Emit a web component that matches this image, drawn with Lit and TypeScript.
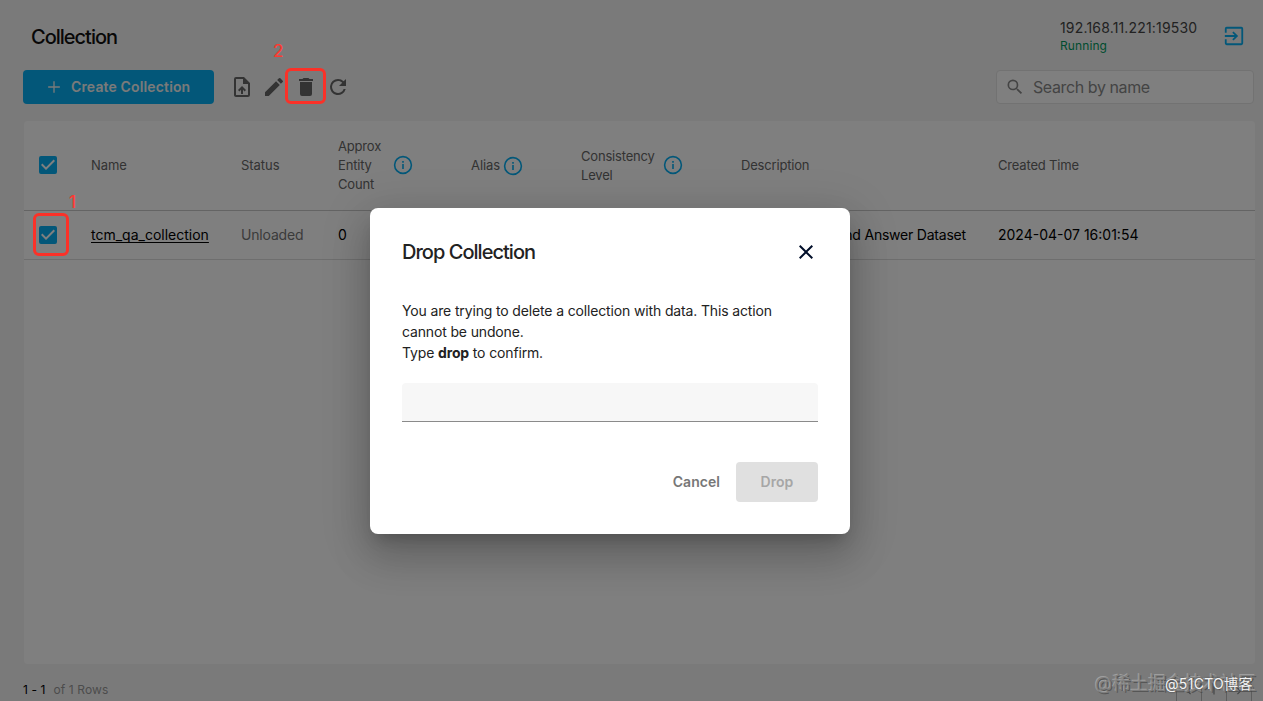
import { LitElement, html, css, svg } from "lit";
import { customElement } from "lit/decorators.js";

const icon = (size: number, body: unknown, cls = "") =>
  html`<svg class=${cls} width=${size} height=${size} viewBox="0 0 24 24" fill="currentColor">${body}</svg>`;

const infoIcon = () => html`<svg class="info" width="20" height="20" viewBox="0 0 20 20" fill="none" stroke="currentColor">
  <circle cx="10" cy="10" r="8.4" stroke-width="1.6"></circle>
  <path d="M10 9v5" stroke-width="1.6"></path><path d="M10 6v1.7" stroke-width="1.6"></path></svg>`;

const checkIcon = () => icon(24, svg`<path d="M19 3H5a2 2 0 0 0-2 2v14a2 2 0 0 0 2 2h14a2 2 0 0 0 2-2V5a2 2 0 0 0-2-2zm-9 14-5-5 1.41-1.41L10 14.17l7.59-7.59L19 8l-9 9z"/>`, "check");

@customElement("app-root")
export class AppRoot extends LitElement {
  static styles = css`
    :host { display: block; position: relative; width: 1263px; height: 701px; overflow: hidden; background: #f5f5f5; font-family: Inter, "Noto Sans CJK SC", sans-serif; font-size: 14px; color: #010e29; }
    * { box-sizing: border-box; }
    svg { display: block; flex: none; }
    .page { height: 701px; padding: 0 9px 0 23px; display: flex; flex-direction: column; white-space: nowrap; color: #000; }
    header { height: 70px; display: flex; align-items: flex-start; padding: 0 8px; }
    h1 { margin: 22px 0 0; flex: 1; font-size: 20px; line-height: 30px; font-weight: 500; letter-spacing: -1px; color: #111; }
    .server { margin: 19px 25px 0 0; width: 138px; line-height: 18px; color: #444; }
    .addr { letter-spacing: 0.17px; }
    .running { font-size: 12px; line-height: 17px; letter-spacing: 0.1px; color: #009a60; }
    .exit { margin-top: 25px; margin-right: 1px; color: #06aff2; }
    .bar { height: 34px; display: flex; align-items: center; }
    .create { width: 191px; height: 34px; border-radius: 4px; background: #06aff2; color: #f4f4f4; display: flex; align-items: center; padding-left: 21px; gap: 7px; font-weight: 600; letter-spacing: 0.14px; margin-right: 16px; }
    .create span { padding-bottom: 1px; }
    .tools { display: flex; gap: 8px; color: #666; flex: 1; }
    .search { width: 258px; height: 34px; border: 1px solid #e4e4e4; border-radius: 4px; background: #fff; display: flex; align-items: center; gap: 8px; padding-left: 8px; font-size: 16px; letter-spacing: -0.4px; color: #888; }
    .table { margin-top: 17px; height: 543px; background: #fff; border-radius: 4px; width: 1231px; margin-left: 1px; flex: none; }
    .row { display: grid; grid-template-columns: 67px 150px 97px 133px 110px 160px 257px 1fr; align-items: center; height: 49px; padding-bottom: 1px; border-bottom: 1px solid #dcdcdc; letter-spacing: 0; }
    .head { height: 90px; padding-bottom: 0; font-size: 13px; line-height: 19px; color: #666; letter-spacing: -0.05px; border-bottom-color: #c8c8c8; }
    .tight { letter-spacing: -0.18px; }
    .desc { letter-spacing: -0.22px; }
    .cell { display: flex; align-items: center; }
    .check { margin-left: 12px; color: #06aff2; }
    .head .check { margin-bottom: 2px; }
    .info { color: #06aff2; }
    .gap3 { gap: 3px; }
    .gap8 { gap: 8px; }
    .gap12 { gap: 12px; }
    .up { margin-bottom: 2px; }
    .name { text-decoration: underline; text-underline-offset: 2px; text-decoration-skip-ink: none; }
    .muted { color: #777; letter-spacing: -0.17px; }
    footer { height: 37px; display: flex; align-items: flex-start; font-size: 12px; padding-top: 18px; gap: 8px; letter-spacing: 0.1px; }
    .rows { color: #999; flex: 1; }
    .pager { display: flex; margin: 2px 2px 0 0; color: #888; }
    .pager span { width: 25px; height: 17px; border-left: 1px solid #bbb; display: flex; justify-content: center; align-items: flex-start; }
    .pager span:last-child { border-right: 1px solid #bbb; width: 26px; }
    .overlay { position: absolute; inset: 0; background: rgba(0, 0, 0, 0.5); display: flex; justify-content: center; padding-top: 208px; align-items: flex-start; }
    .dialog { width: 480px; height: 326px; margin-right: 43px; border-radius: 8px; background: #fff; padding: 32px; display: flex; flex-direction: column; color: #222; box-shadow: 0 11px 15px -7px rgba(0,0,0,.2), 0 24px 38px 3px rgba(0,0,0,.14), 0 9px 46px 8px rgba(0,0,0,.12); }
    .dhead { display: flex; justify-content: space-between; height: 24px; align-items: center; font-size: 20px; font-weight: 500; letter-spacing: -0.97px; }
    .dhead svg { color: #010e29; }
    .text { margin-top: 36px; line-height: 21px; letter-spacing: -0.145px; white-space: nowrap; }
    .input { margin-top: 20px; height: 39px; background: #f7f7f7; border-bottom: 1px solid #8a8a8a; border-radius: 4px 4px 0 0; }
    .actions { margin-top: 40px; display: flex; justify-content: flex-end; align-items: center; gap: 16px; font-weight: 600; color: #777; letter-spacing: 0.05px; }
    .actions > span { padding-bottom: 1px; }
    .drop { width: 82px; height: 40px; padding-bottom: 1px; background: #e0e0e0; color: #a6a6a6; border-radius: 4px; display: flex; align-items: center; justify-content: center; }
    .mark { position: absolute; border: 3px solid #fb3128; border-radius: 6px; }
    .m1 { left: 33px; top: 213px; width: 36px; height: 43px; }
    .m2 { left: 285px; top: 68px; width: 41px; height: 36px; }
    .num { position: absolute; color: #fb3b32; font-size: 17px; line-height: 20px; font-weight: 500; }
    .n1 { left: 69px; top: 192px; }
    .n2 { left: 273px; top: 41px; }
    .wm { position: absolute; white-space: nowrap; }
    .w1 { left: 1095px; top: 670px; font-size: 18px; line-height: 28px; color: rgba(128,128,128,.8); text-shadow: -1px -1px 0 rgba(180,180,180,.65), 1px 1px 0 rgba(70,70,70,.7); }
    .w2 { left: 1165px; top: 674px; font-size: 14px; letter-spacing: 0.3px; line-height: 20px; color: #f4f4f4; text-shadow: 0 0 2px #444; }
  `;

  render() {
    return html`
      <div class="page">
        <header>
          <h1>Collection</h1>
          <div class="server"><div class="addr">192.168.11.221:19530</div><div class="running">Running</div></div>
          ${icon(22, svg`<path d="M10.1 15.6 11.5 17l5-5-5-5-1.4 1.4 2.6 2.6H2v2h10.7zM20 2H4a2 2 0 0 0-2 2v4.5h2V4h16v16H4v-4.500H2V20a2 2 0 0 0 2 2h16a2 2 0 0 0 2-2V4a2 2 0 0 0-2-2z"/>`, "exit")}
        </header>
        <div class="bar">
          <div class="create">${icon(20, svg`<path d="M19 12.8h-6.2V19h-1.6v-6.2H5v-1.6h6.2V5h1.600v6.2H19z"/>`)}<span>Create Collection</span></div>
          <div class="tools">
            ${icon(24, svg`<path d="M14 2H6a2 2 0 0 0-2 2v16c0 1.1.89 2 1.99 2H18a2 2 0 0 0 2-2V8l-6-6zm4 18H6V4h7v5h5v11zM8 15.01l1.41 1.41L11 14.84V19h2v-4.16l1.59 1.59L16 15.01 12.01 11z"/>`)}
            ${icon(24, svg`<path d="M3 17.25V21h3.75L17.81 9.94l-3.75-3.75L3 17.25zM20.71 7.04a1 1 0 0 0 0-1.41l-2.34-2.34a1 1 0 0 0-1.41 0l-1.83 1.83 3.75 3.75 1.83-1.83z"/>`)}
            ${icon(24, svg`<path d="M6 19a2 2 0 0 0 2 2h8a2 2 0 0 0 2-2V7H6v12zM19 4h-3.5l-1-1h-5l-1 1H5v2h14V4z"/>`)}
            ${icon(24, svg`<path d="M17.65 6.35A7.96 7.96 0 0 0 12 4a8 8 0 1 0 7.73 10h-2.08A6 6 0 1 1 12 6c1.66 0 3.14.69 4.22 1.78L13 11h7V4l-2.35 2.35z"/>`)}
          </div>
          <div class="search">${icon(20, svg`<path d="M15.5 14h-.79l-.28-.27A6.47 6.47 0 0 0 16 9.5 6.5 6.5 0 1 0 9.5 16c1.61 0 3.09-.59 4.23-1.57l.27.28v.79l5 4.99L20.49 19l-4.99-5zm-6 0a4.5 4.5 0 1 1 0-9 4.5 4.5 0 0 1 0 9z"/>`)}<span>Search by name</span></div>
        </div>
        <div class="table">
          <div class="row head">
            <div>${checkIcon()}</div>
            <div>Name</div>
            <div>Status</div>
            <div class="cell gap12 tight"><span>Approx<br>Entity<br>Count</span><div class="up">${infoIcon()}</div></div>
            <div class="cell gap3"><span>Alias</span>${infoIcon()}</div>
            <div class="cell gap8 tight"><span>Consistency<br>Level</span><div class="up">${infoIcon()}</div></div>
            <div class="tight">Description</div>
            <div class="tight">Created Time</div>
          </div>
          <div class="row">
            <div>${checkIcon()}</div>
            <div><span class="name">tcm_qa_collection</span></div>
            <div class="muted">Unloaded</div>
            <div>0</div><div></div><div></div>
            <div class="desc">TCM Question and Answer Dataset</div>
            <div>2024-04-07 16:01:54</div>
          </div>
        </div>
        <footer><span>1 - 1</span><span class="rows">of 1 Rows</span>
          <div class="pager">
            <span>${icon(14, svg`<path d="M15.4 7.4 14 6l-6 6 6 6 1.400-1.400L10.800 12z"/>`)}</span>
            <span>${icon(14, svg`<path d="M11 4h2v14h-2z"/>`)}</span>
            <span>${icon(14, svg`<path d="M10 6 8.600 7.400 13.200 12l-4.600 4.600L10 18l6-6z"/>`)}</span>
          </div>
        </footer>
      </div>
      <div class="overlay">
        <div class="dialog">
          <div class="dhead"><span>Drop Collection</span>${icon(24, svg`<path d="M19 6.41 17.59 5 12 10.59 6.41 5 5 6.41 10.59 12 5 17.59 6.41 19 12 13.41 17.59 19 19 17.59 13.41 12z"/>`)}</div>
          <div class="text">You are trying to delete a collection with data. This action<br>cannot be undone.<br>Type <b>drop</b> to confirm.</div>
          <div class="input"></div>
          <div class="actions"><span>Cancel</span><div class="drop">Drop</div></div>
        </div>
      </div>
      <div class="mark m1"></div><div class="mark m2"></div>
      <div class="num n1">1</div><div class="num n2">2</div>
      <div class="wm w1">@稀土掘金技术社区</div>
      <div class="wm w2">@51CTO博客</div>
    `;
  }
}
